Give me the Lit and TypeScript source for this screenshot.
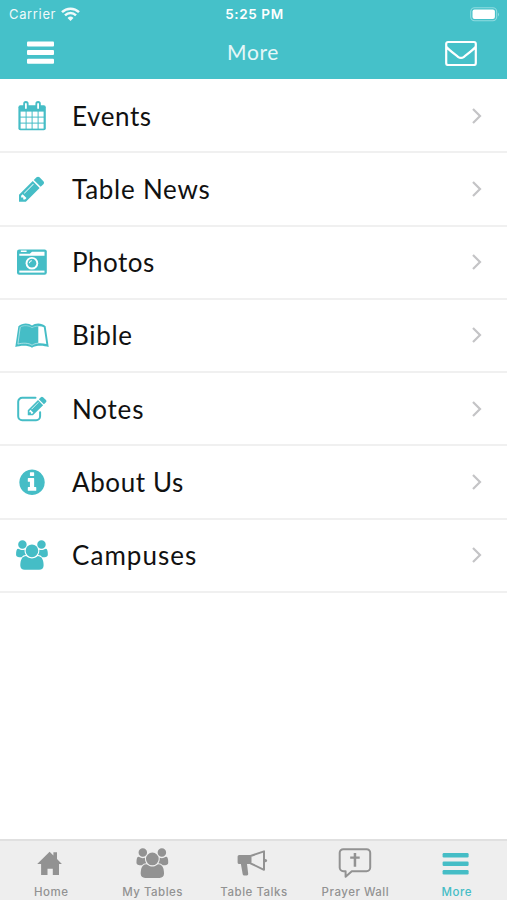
import { LitElement, html, css, svg } from "lit";
import { customElement } from "lit/decorators.js";
import { styleMap } from "lit/directives/style-map.js";

const PENCIL =
  "M491 1536l91-91-235-235-91 91v107h128v128h107zm523-928q0-22-22-22-10 0-17 7l-542 542q-7 7-7 17 0 22 22 22 10 0 17-7l542-542q7-7 7-17zm-54-192l416 416-832 832h-416v-416zm683 96q0 53-37 90l-166 166-416-416 166-165q36-38 90-38 53 0 91 38l235 234q37 39 37 91z";
const INFO =
  "M1152 1376v-160q0-14-9-23t-23-9h-96v-512q0-14-9-23t-23-9h-320q-14 0-23 9t-9 23v160q0 14 9 23t23 9h96v320h-96q-14 0-23 9t-9 23v160q0 14 9 23t23 9h448q14 0 23-9t9-23zm-128-896v-160q0-14-9-23t-23-9h-192q-14 0-23 9t-9 23v160q0 14 9 23t23 9h192q14 0 23-9t9-23zm640 416q0 209-103 385.5t-279.5 279.5-385.5 103-385.5-103-279.5-279.5-103-385.5 103-385.5 279.5-279.5 385.5-103 385.5 103 279.5 279.5 103 385.5z";
const USERS =
  "M657 896q-162 5-265 128h-134q-82 0-138-40.5t-56-118.5q0-353 124-353 6 0 43.5 21t97.5 42.5 119 21.5q67 0 133-23-5 37-5 66 0 139 81 256zm1071 637q0 120-73 189.5t-194 69.5h-874q-121 0-194-69.5t-73-189.5q0-53 3.5-103.5t14-109 26.5-108.5 43-97.5 62-81 85.5-53.5 111.5-20q10 0 43 21.5t73 48 107 48 135 21.5 135-21.5 107-48 73-48 43-21.5q61 0 111.5 20t85.5 53.5 62 81 43 97.5 26.5 108.5 14 109 3.5 103.5zm-1024-1277q0 106-75 181t-181 75-181-75-75-181 75-181 181-75 181 75 75 181zm704 384q0 159-112.5 271.5t-271.5 112.5-271.5-112.5-112.5-271.5 112.5-271.5 271.5-112.5 271.5 112.5 112.5 271.5zm576 225q0 78-56 118.5t-138 40.5h-134q-103-123-265-128 81-117 81-256 0-29-5-66 66 23 133 23 59 0 119-21.5t97.5-42.5 43.5-21q124 0 124 353zm-128-609q0 106-75 181t-181 75-181-75-75-181 75-181 181-75 181 75 75 181z";

// Each list icon lives on a 40x40 canvas.
const listIcons = {
  events: svg`
    <rect x="6.4" y="9.2" width="27.4" height="25" rx="2"/>
    <rect x="11.2" y="5" width="5.4" height="9.4" rx="2.7"/><rect x="23.4" y="5" width="5.4" height="9.4" rx="2.7"/>
    <g fill="#fff">
      <rect x="13" y="7" width="1.8" height="6" rx=".9"/><rect x="25.2" y="7" width="1.8" height="6" rx=".9"/>
      ${[15.6, 21.6, 27.6].map((y) => [8.6, 14.6, 20.6, 26.6].map((x) => svg`<rect x=${x} y=${y} width="5" height="5"/>`))}
    </g>`,
  news: svg`<path transform="translate(4.9 5.2) scale(.0165)" d=${PENCIL}/>`,
  photos: svg`
    <rect x="5" y="7.4" width="29.8" height="25.4" rx="2.2"/>
    <g fill="#fff">
      <path d="M7.3 13.7v-1.9h10.5l2.2-2h12.500v3.900zM8.800 8.600h5.800v1.500H8.800z"/>
      <rect x="7.300" y="28.600" width="25.200" height="2"/>
      <circle cx="19.900" cy="21.200" r="6.300"/>
    </g>
    <circle cx="19.900" cy="21.200" r="4.400"/>
    <path d="M17.400 21.200a2.500 2.500 0 0 1 2.500-2.500" fill="none" stroke="#fff" stroke-width="1"/>`,
  bible: svg`
    <path d="M6.4 11.2C10.5 7.7 16.8 7.900 20 10.600c3.200-2.700 9.500-2.900 13.600.6l3.100 20.900c-4.400-1.700-12.600-2.300-16.700.6-4.100-2.900-12.300-2.300-16.700-.6z"/>
    <path d="M26.300 11.200c2-.2 3.900.1 5.500 1.100l2.500 16.700c-2.300-.8-5.100-1-8-.8z" fill="#fff"/>
    <path d="M8.200 12.200l-2.300 16.900c4.800-1.500 11.200-1.200 14.100 1.200 1.700-1.300 3.700-1.900 6.300-2.100" fill="none" stroke="#fff" stroke-opacity=".75" stroke-width=".7"/>
    <path d="M8.200 12.200c3.300-2.400 9.200-1.800 11.800.6 1.600-1.100 3.900-1.600 6.300-1.600" fill="none" stroke="#fff" stroke-opacity=".6" stroke-width=".6"/>`,
  notes: svg`
    <path d="M23.5 8.8H10.2a4 4 0 0 0-4 4v14.4a4 4 0 0 0 4 4h13.900a4 4 0 0 0 4-4v-4" fill="none" stroke="currentColor" stroke-width="2" stroke-linecap="round"/>
    <path transform="translate(14.200 5.900) scale(.0123)" d=${PENCIL}/>`,
  about: svg`<path transform="translate(5.2 5.5) scale(.01655)" d=${INFO}/>`,
  campuses: svg`<path transform="translate(3 5.2) scale(.01655)" d=${USERS}/>`,
};

// Tab icons are drawn on a 40x36 canvas.
const tabIcons = {
  home: svg`<path d="M18.600 7.700l3.800 3.800V8.200H26v6.900l4.900 5H28v11h-6.200v-6.400h-5.300v6.400h-6.400v-11H6.200z"/>`,
  tables: svg`<path transform="translate(3.400 4.300) scale(.01655)" d=${USERS}/>`,
  talks: svg`
    <path d="M6.200 11h11.800v9h-4l1.200 9.800a1.400 1.400 0 0 1-1.400 1.600h-2.600a1.600 1.600 0 0 1-1.500-1.200L7.900 20H6.200a1.600 1.600 0 0 1-1.600-1.600v-5.800A1.600 1.600 0 0 1 6.200 11z"/>
    <path d="M17.500 12L31 7.400v18.400L17.500 19.300z" fill="none" stroke="currentColor" stroke-width="2" stroke-linejoin="round"/>
    <circle cx="32.400" cy="16.600" r="1.700"/>`,
  prayer: svg`
    <path d="M8.300 5.200h23.300a3.600 3.600 0 0 1 3.600 3.600v14.800a3.600 3.600 0 0 1-3.600 3.600H16.800l-6.200 5.600v-5.600H8.300a3.600 3.600 0 0 1-3.600-3.600V8.800a3.600 3.600 0 0 1 3.600-3.600z" fill="none" stroke="currentColor" stroke-width="2" stroke-linejoin="round"/>
    <path d="M18.700 9h2.500v3.500h3.500v2.300h-3.500v7.900h-2.500v-7.900h-3.500v-2.300h3.500z"/>`,
  more: svg`<rect x="6.6" y="9" width="26" height="4.400" rx="1.200"/><rect x="6.600" y="17.500" width="26" height="4.400" rx="1.200"/><rect x="6.600" y="26" width="26" height="4.400" rx="1.200"/>`,
};

const rows = [
  { icon: listIcons.events, label: "Events", spacing: 0.6 },
  { icon: listIcons.news, label: "Table News", spacing: 0.75 },
  { icon: listIcons.photos, label: "Photos", spacing: 0.5 },
  { icon: listIcons.bible, label: "Bible", spacing: 0.7 },
  { icon: listIcons.notes, label: "Notes", spacing: 0.8 },
  { icon: listIcons.about, label: "About Us", spacing: 0.6 },
  { icon: listIcons.campuses, label: "Campuses", spacing: 1.05 },
];

const tabs = [
  { icon: tabIcons.home, label: "Home", active: false },
  { icon: tabIcons.tables, label: "My Tables", active: false },
  { icon: tabIcons.talks, label: "Table Talks", active: false },
  { icon: tabIcons.prayer, label: "Prayer Wall", active: false },
  { icon: tabIcons.more, label: "More", active: true },
];

@customElement("app-root")
export class AppRoot extends LitElement {
  static styles = css`
    :host { display: flex; flex-direction: column; height: 900px; background: #fff; overflow: hidden; font-family: Lato, "Liberation Sans", sans-serif; }
    svg { display: block; fill: currentColor; flex: none; }
    header { height: 79px; flex: none; background: #45c1c9; color: #fff; }
    .status { height: 27px; display: grid; grid-template-columns: 1fr auto 1fr; align-items: center; padding: 0 7px 0 9px; font: 13px/28px Inter, sans-serif; }
    .carrier { display: flex; align-items: center; gap: 5px; letter-spacing: .65px; opacity: .92; }
    .time { font-size: 13.5px; font-weight: 600; letter-spacing: .6px; }
    .battery { justify-self: end; }
    .nav { height: 52px; display: grid; grid-template-columns: 1fr auto 1fr; align-items: center; padding: 0 30px 0 26px; }
    .title { font-size: 21px; line-height: 50px; letter-spacing: .6px; padding-left: 3px; margin-top: -2px; color: #e5f7f8; }
    .mail { justify-self: end; }
    .list { flex: 1; padding-top: 1px; }
    .row { height: 73.25px; box-sizing: border-box; border-bottom: 2px solid #f0f0f0; display: flex; align-items: center; padding: 0 24px 0 12px; color: #45bdc6; }
    .label { flex: 1; margin-left: 20px; font-size: 26px; line-height: 36px; color: #111; }
    .chevron { color: #c4c4c6; }
    .tabs { height: 61px; flex: none; box-sizing: border-box; border-top: 2px solid #e0e0e0; background: #eee; display: grid; grid-template-columns: repeat(5, 1fr); color: #929292; }
    .tab { display: flex; flex-direction: column; align-items: center; padding-top: 3px; }
    .tab-label { font: 500 11.5px/18px Inter, sans-serif; letter-spacing: .5px; white-space: nowrap; margin-top: 3px; padding-left: 1px; }
    .active { color: #45bdc6; }
  `;

  render() {
    return html`
      <header>
        <div class="status">
          <div class="carrier">Carrier
            <svg width="19" height="15" viewBox="0 0 19 15" fill="none" stroke="#fff" stroke-width="2.5">
              <path d="M1 5.1a12.2 12.2 0 0 1 17 0M4 8.3a8 8 0 0 1 11 0" fill="none"/><path d="M9.5 14l-3-3a4.3 4.3 0 0 1 6 0z" fill="#fff" stroke="none"/>
            </svg>
          </div>
          <div class="time">5:25 PM</div>
          <svg class="battery" width="30" height="15" viewBox="0 0 30 15">
            <rect x=".7" y=".8" width="26" height="13" rx="4" fill="none" stroke="#8fdbe0" stroke-width="1.1"/><rect x="2.500" y="2.600" width="22.400" height="9.400" rx="2"/><path d="M28 5.500q2 2 0 4z" fill="#8fdbe0"/>
          </svg>
        </div>
        <div class="nav">
          <svg width="30" height="24" viewBox="0 0 30 24"><rect x="1" y=".5" width="27" height="5" rx="1"/><rect x="1" y="9" width="27" height="5" rx="1"/><rect x="1" y="17.700" width="27" height="5" rx="1"/></svg>
          <div class="title">More</div>
          <svg class="mail" width="32" height="26" viewBox="0 0 32 26"><path d="M3 2h26a1.8 1.8 0 0 1 1.8 1.8v19.4A1.8 1.8 0 0 1 29 25H3a1.8 1.8 0 0 1-1.8-1.8V3.8A1.8 1.8 0 0 1 3 2zM1.5 7c3.5 4 8 7 11.5 9.8q3 2.3 6 0C22.5 14 27 11 30.5 7" fill="none" stroke="#fff" stroke-width="2.2"/></svg>
        </div>
      </header>
      <div class="list">
        ${rows.map((r) => html`
          <div class="row">
            <svg width="40" height="40" viewBox="0 0 40 40">${r.icon}</svg>
            <span class="label" style=${styleMap({ letterSpacing: `${r.spacing}px` })}>${r.label}</span>
            <svg class="chevron" width="12" height="18" viewBox="0 0 12 18"><path d="M2 2l7 7-7 7" fill="none" stroke="currentColor" stroke-width="2.2"/></svg>
          </div>`)}
      </div>
      <div class="tabs">
        ${tabs.map((t) => html`
          <div class="tab ${t.active ? "active" : ""}">
            <svg width="40" height="36" viewBox="0 0 40 36">${t.icon}</svg>
            <span class="tab-label">${t.label}</span>
          </div>`)}
      </div>`;
  }
}
